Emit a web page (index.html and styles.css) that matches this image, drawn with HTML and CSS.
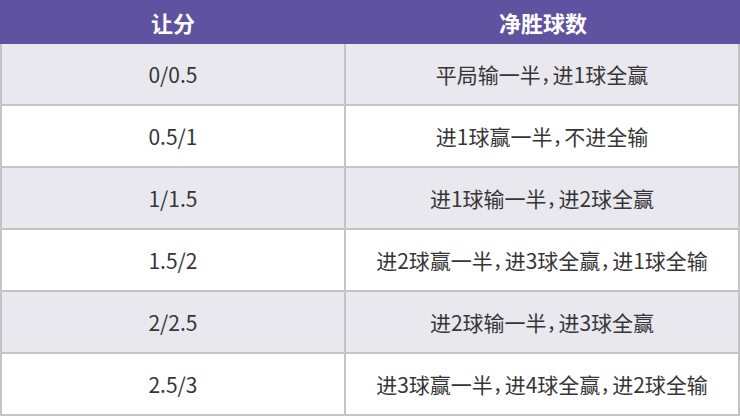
FILE: index.html
```html
<!DOCTYPE html>
<html lang="zh">
<head>
<meta charset="utf-8">
<link rel="stylesheet" href="styles.css">
</head>
<body>
<div class="table">
  <div class="head">
    <div class="hcell">让分</div>
    <div class="hcell">净胜球数</div>
  </div>
  <div class="row odd"><div class="cell left">0/0.5</div><div class="cell">平局输一半<span class="comma">,</span>进1球全赢</div></div>
  <div class="row"><div class="cell left">0.5/1</div><div class="cell">进1球赢一半<span class="comma">,</span>不进全输</div></div>
  <div class="row odd"><div class="cell left">1/1.5</div><div class="cell">进1球输一半<span class="comma">,</span>进2球全赢</div></div>
  <div class="row"><div class="cell left">1.5/2</div><div class="cell">进2球赢一半<span class="comma">,</span>进3球全赢<span class="comma">,</span>进1球全输</div></div>
  <div class="row odd"><div class="cell left">2/2.5</div><div class="cell">进2球输一半<span class="comma">,</span>进3球全赢</div></div>
  <div class="row"><div class="cell left">2.5/3</div><div class="cell">进3球赢一半<span class="comma">,</span>进4球全赢<span class="comma">,</span>进2球全输</div></div>
</div>
</body>
</html>
```
FILE: styles.css
```css
html, body {
  margin: 0;
  padding: 0;
  background: #ffffff;
}
body {
  font-family: "Noto Sans CJK SC", "Noto Sans", sans-serif;
  color: #363636;
}
.table {
  width: 740px;
  height: 416px;
  display: flex;
  flex-direction: column;
}
.head {
  height: 44px;
  background: #5f52a1;
  display: grid;
  grid-template-columns: 346px 1fr;
}
.hcell {
  color: #ffffff;
  font-weight: 700;
  font-size: 22px;
  display: flex;
  align-items: center;
  justify-content: center;
}
.row {
  height: 62px;
  box-sizing: border-box;
  border-left: 2px solid #c4c4c6;
  border-right: 2px solid #c4c4c6;
  border-bottom: 2px solid #c4c4c6;
  display: grid;
  grid-template-columns: 344px 1fr;
  background: #ffffff;
}
.row.odd {
  background: #e9e8ef;
}
.cell {
  font-size: 21px;
  display: flex;
  align-items: center;
  justify-content: center;
  white-space: nowrap;
}
.comma {
  margin: 0 4px 0 2px;
  position: relative;
  top: -2px;
}
.cell.left {
  border-right: 2px solid #c4c4c6;
}
```
